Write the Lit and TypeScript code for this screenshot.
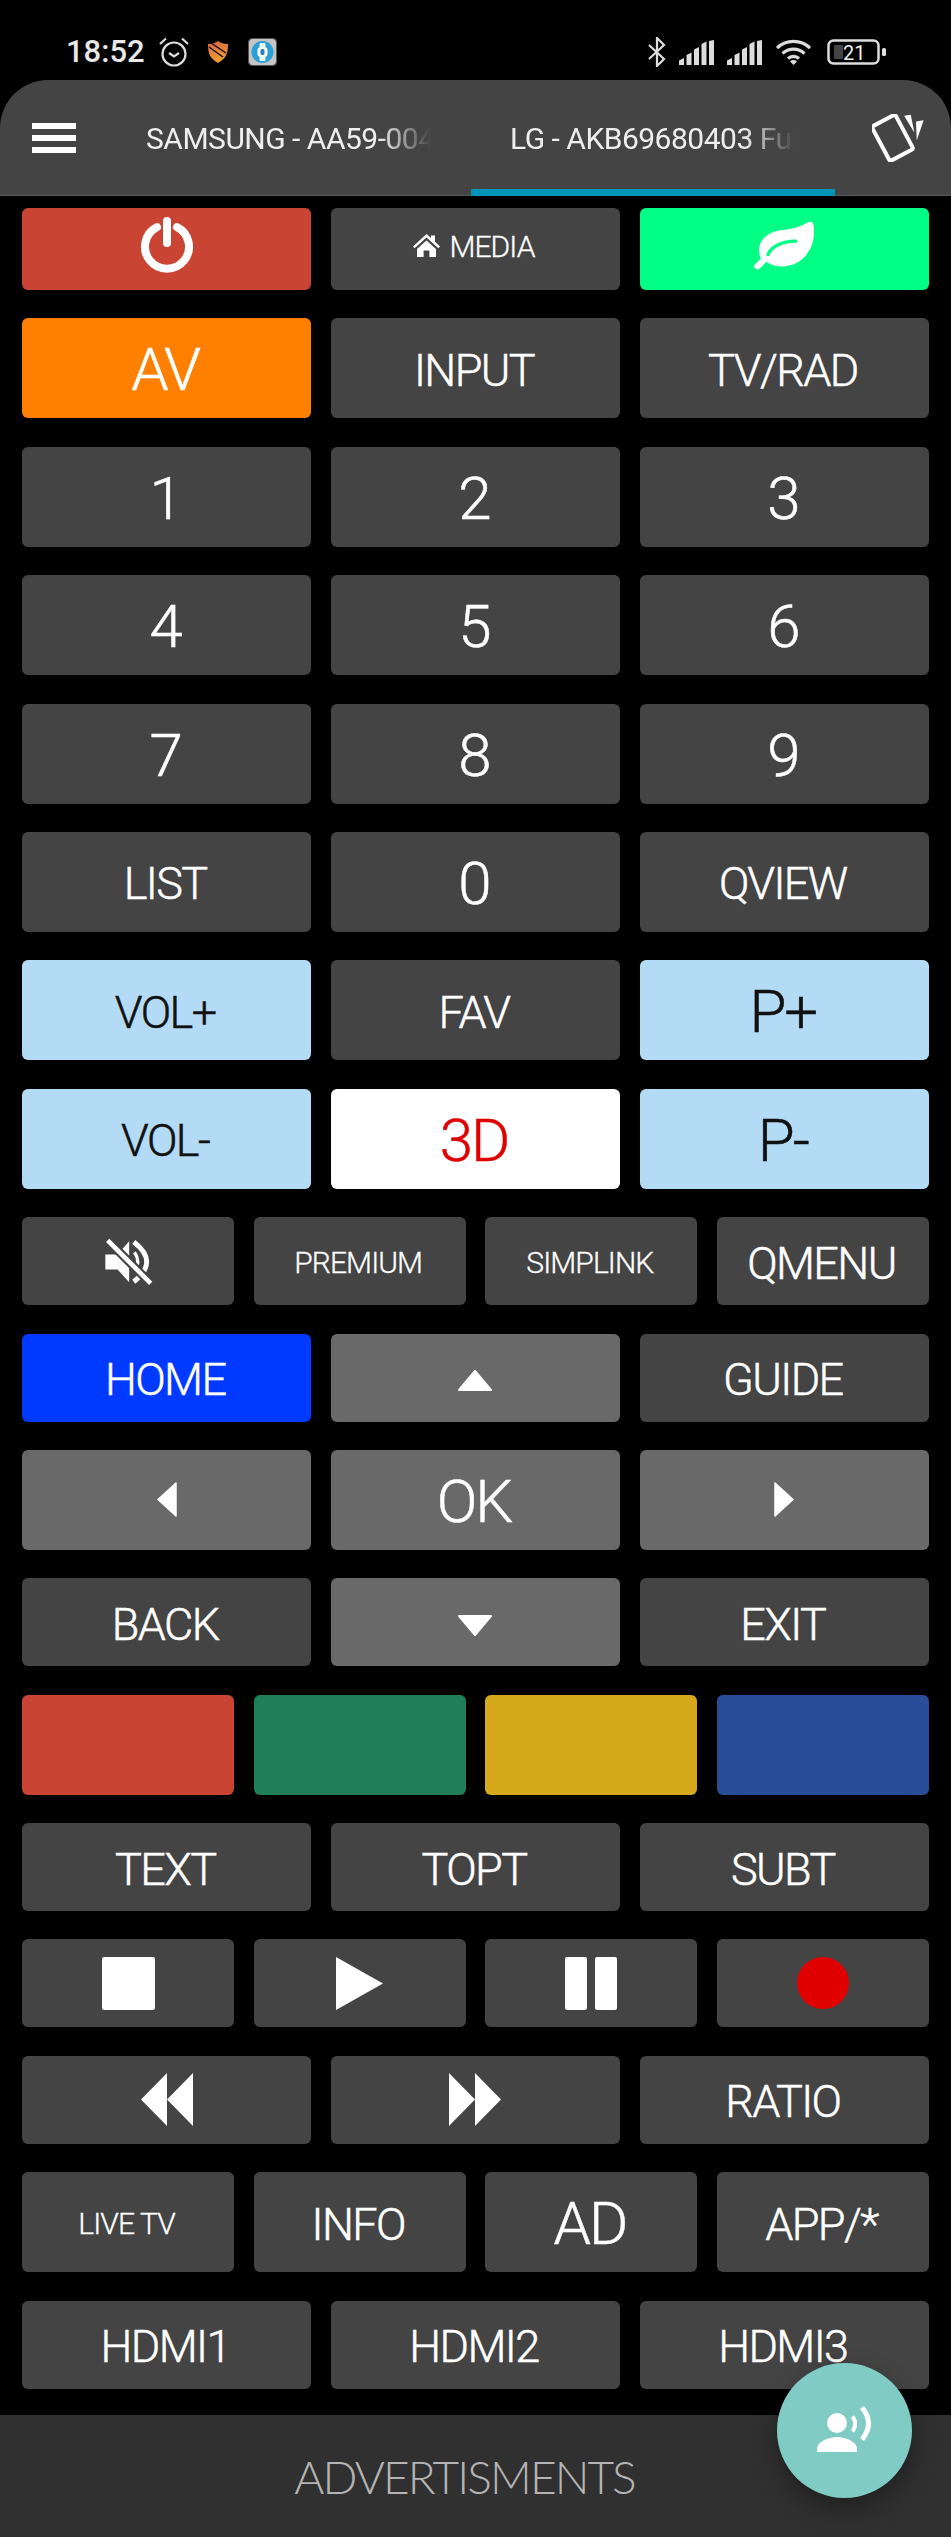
import { LitElement, html, css, svg } from "lit";
import { customElement } from "lit/decorators.js";

type Btn = { t?: unknown; c?: string };
type Row = { h: "tall" | "short" | "first"; n: 3 | 4; b: Btn[] };

const ic = {
  power: svg`<svg class="i" width="60" height="60" viewBox="0 0 60 60"><path d="M20 12.100A22 22 0 1 0 40 12.100" fill="none" stroke="#fff" stroke-width="8" stroke-linecap="round"/><path d="M30 6V28" fill="none" stroke="#fff" stroke-width="8" stroke-linecap="round"/></svg>`,
  home: svg`<svg class="home" width="27" height="23" viewBox="0 0 27 23"><path fill="#fff" d="M13.500 0 18 4V1.500h4v6.300L27 12.400l-1.600 1.800L13.500 3.400 1.600 14.200 0 12.400zM4 15 13.500 6.400 23 15v8h-6.600v-6.600h-5.800V23H4z"/></svg>`,
  leaf: svg`<svg class="i" width="62" height="49" viewBox="160 448 186 146"><path fill="#fff" d="M332 450C322 450 300 470 260 473 210 476 178 500 178 535 178 545 180 553 184 560L166 577C160 583 164 590 172 592 178 593 180 590 184 586L200 570C212 578 225 584 245 584 310 584 345 530 343 475 343 460 340 450 332 450Z"/><path d="M205 548C215 525 245 508 288 508" fill="none" stroke="#00ff85" stroke-width="10" stroke-linecap="round"/></svg>`,
  mute: svg`<svg class="i" width="49" height="47" viewBox="245 88 146 142"><path fill="#fff" d="M248 138H285L320 98V222L285 183H248z"/><path d="M336 131Q356 160 336 187" fill="none" stroke="#fff" stroke-width="10"/><path d="M334 100Q412 160 334 220" fill="none" stroke="#fff" stroke-width="15"/><path d="M255 95 385 225" stroke="#444" stroke-width="27" fill="none"/><path d="M255 95 385 225" stroke="#fff" stroke-width="14" fill="none"/></svg>`,
  up: svg`<svg class="i tu" width="34" height="21" viewBox="0 0 34 21"><path fill="#fff" stroke="#fff" stroke-width="2" stroke-linejoin="round" d="M17 1 33 20H1z"/></svg>`,
  down: svg`<svg class="i tu" width="34" height="21" viewBox="0 0 34 21"><path fill="#fff" stroke="#fff" stroke-width="2" stroke-linejoin="round" d="M17 20 33 1H1z"/></svg>`,
  left: svg`<svg class="i" width="20" height="35" viewBox="0 0 20 35"><path fill="#fff" stroke="#fff" stroke-width="1.500" stroke-linejoin="round" d="M1 17.500 19 1V34z"/></svg>`,
  right: svg`<svg class="i" width="20" height="35" viewBox="0 0 20 35"><path fill="#fff" stroke="#fff" stroke-width="1.500" stroke-linejoin="round" d="M19 17.500 1 1V34z"/></svg>`,
  stop: svg`<svg class="i" width="53" height="53" viewBox="0 0 53 53"><rect width="53" height="53" rx="2" fill="#fff"/></svg>`,
  play: svg`<svg class="i" width="47" height="53" viewBox="0 0 47 53"><path fill="#fff" d="M0 0 47 26.500 0 53z"/></svg>`,
  pause: svg`<svg class="i" width="52" height="53" viewBox="0 0 52 53"><rect width="22" height="53" rx="2" fill="#fff"/><rect x="30" width="22" height="53" rx="2" fill="#fff"/></svg>`,
  rec: svg`<svg class="i" width="52" height="52" viewBox="0 0 52 52"><circle cx="26" cy="26" r="26" fill="#e00000"/></svg>`,
  rew: svg`<svg class="i" width="52" height="53" viewBox="0 0 52 53"><path fill="#fff" d="M0 26.500 26 0V53zM26 26.500 52 0V53z"/></svg>`,
  ff: svg`<svg class="i" width="52" height="53" viewBox="0 0 52 53"><path fill="#fff" d="M26 26.500 0 0V53zM52 26.500 26 0V53z"/></svg>`,
};

const rows: Row[] = [
  { h: "first", n: 3, b: [{ t: ic.power, c: "red" }, { t: html`${ic.home}<span class="tx media">MEDIA</span>` }, { t: ic.leaf, c: "mint" }] },
  { h: "tall", n: 3, b: [{ t: "AV", c: "orange xl" }, { t: "INPUT" }, { t: "TV/RAD" }] },
  { h: "tall", n: 3, b: [{ t: "1", c: "xl" }, { t: "2", c: "xl" }, { t: "3", c: "xl" }] },
  { h: "tall", n: 3, b: [{ t: "4", c: "xl" }, { t: "5", c: "xl" }, { t: "6", c: "xl" }] },
  { h: "tall", n: 3, b: [{ t: "7", c: "xl" }, { t: "8", c: "xl" }, { t: "9", c: "xl" }] },
  { h: "tall", n: 3, b: [{ t: "LIST" }, { t: "0", c: "xl" }, { t: "QVIEW" }] },
  { h: "tall", n: 3, b: [{ t: "VOL+", c: "sky" }, { t: "FAV" }, { t: "P+", c: "sky xl" }] },
  { h: "tall", n: 3, b: [{ t: "VOL-", c: "sky" }, { t: "3D", c: "white xl" }, { t: "P-", c: "sky xl" }] },
  { h: "short", n: 4, b: [{ t: ic.mute }, { t: "PREMIUM", c: "sm" }, { t: "SIMPLINK", c: "sm" }, { t: "QMENU" }] },
  { h: "short", n: 3, b: [{ t: "HOME", c: "blue" }, { t: ic.up, c: "pad" }, { t: "GUIDE" }] },
  { h: "tall", n: 3, b: [{ t: ic.left, c: "pad" }, { t: "OK", c: "pad xl" }, { t: ic.right, c: "pad" }] },
  { h: "short", n: 3, b: [{ t: "BACK" }, { t: ic.down, c: "pad" }, { t: "EXIT" }] },
  { h: "tall", n: 4, b: [{ c: "red" }, { c: "green" }, { c: "yellow" }, { c: "navy" }] },
  { h: "short", n: 3, b: [{ t: "TEXT" }, { t: "TOPT" }, { t: "SUBT" }] },
  { h: "short", n: 4, b: [{ t: ic.stop }, { t: ic.play }, { t: ic.pause }, { t: ic.rec }] },
  { h: "short", n: 3, b: [{ t: ic.rew }, { t: ic.ff }, { t: "RATIO" }] },
  { h: "tall", n: 4, b: [{ t: "LIVE TV", c: "sm" }, { t: "INFO" }, { t: "AD", c: "xl" }, { t: "APP/*" }] },
  { h: "short", n: 3, b: [{ t: "HDMI1" }, { t: "HDMI2" }, { t: "HDMI3" }] },
];

const signal = svg`<svg width="35" height="25" viewBox="0 0 35 25"><path fill="#ddd" d="M0 25V20.500L5 18V25zM7.500 25V15L12.500 12.500V25zM15 25V9.500L20 7V25zM22.500 25V4L27.500 1.500V25zM30 25V1L35 0V25z"/></svg>`;

@customElement("app-root")
export class AppRoot extends LitElement {
  static styles = css`
    :host {
      display: block;
      position: relative;
      width: 951px;
      height: 2537px;
      overflow: hidden;
      background: #000;
      font-family: Roboto, "Liberation Sans", sans-serif;
      color: #fff;
    }
    .page { display: flex; flex-direction: column; height: 100%; }
    .status {
      height: 80px;
      flex: none;
      display: flex;
      align-items: flex-start;
      justify-content: space-between;
      padding: 37px 65px 0 66px;
      box-sizing: border-box;
    }
    .st-l, .st-r { display: flex; align-items: center; height: 30px; }
    .time { font-size: 31px; font-weight: 500; color: #e8e8e8; line-height: 30px; width: 77px; white-space: nowrap; margin-right: 16px; }
    .shield { margin: 0 20px 0 19px; }
    .st-r { gap: 13px; }
    .bat { margin-left: 2px; }
    .bar {
      height: 116px;
      flex: none;
      box-sizing: border-box;
      background: #444;
      border-radius: 48px 48px 0 0;
      border-bottom: 1px solid #5a5a5a;
      display: flex;
      align-items: stretch;
      position: relative;
    }
    .burger { width: 107px; flex: none; display: flex; flex-direction: column; gap: 6.500px; padding: 43px 0 0 32px; box-sizing: border-box; }
    .burger i { display: block; width: 44px; height: 5.500px; background: #fff; }
    .tab { width: 364px; flex: none; box-sizing: border-box; padding: 0 40px 0 39px; position: relative; display: flex; justify-content: center; }
    .tab span {
      display: block;
      width: 285px;
      overflow: hidden;
      white-space: nowrap;
      font-size: 30px;
      letter-spacing: -0.500px;
      line-height: 35px;
      margin-top: 41px;
      height: 40px;
      color: #eee;
      -webkit-mask-image: linear-gradient(90deg, #000 82%, transparent 100%);
      mask-image: linear-gradient(90deg, #000 82%, transparent 100%);
    }
    .tab.on::after { content: ""; position: absolute; left: 0; right: 0; bottom: -1px; height: 7px; background: #0093b8; }
    .swap { position: absolute; right: 26px; top: 34px; }
    .pad-area { flex: 1; display: flex; flex-direction: column; gap: 28.400px; padding: 12px 22px 0; min-height: 0; }
    .row { display: grid; gap: 19.500px; flex: none; }
    .row.n3 { grid-template-columns: repeat(3, 1fr); }
    .row.n4 { grid-template-columns: repeat(4, 1fr); }
    .row.tall { height: 100px; }
    .row.short { height: 88px; }
    .row.first { height: 82px; }
    .row.first .btn { box-sizing: border-box; padding-bottom: 8px; }
    .btn {
      background: #444;
      border-radius: 6px;
      display: flex;
      align-items: center;
      justify-content: center;
      font-size: 45px;
      font-weight: 300;
      -webkit-text-stroke: 0.500px currentColor;
      letter-spacing: -1.600px;
      line-height: 1;
      color: #fff;
      white-space: nowrap;
    }
    .tx { padding: 4px 3px 0 0; }
    .btn.xl { font-size: 60px; letter-spacing: -2px; }
    .btn.sm { font-size: 30px; letter-spacing: -0.900px; -webkit-text-stroke: 0.300px currentColor; }
    .btn.red { background: #c94433; }
    .btn.mint { background: #00ff85; }
    .btn.orange { background: #ff8000; }
    .btn.sky { background: #b3dbf5; color: #111; }
    .btn.white { background: #fff; color: #e00000; }
    .btn.blue { background: #0039ff; }
    .btn.pad { background: #696969; }
    .btn.green { background: #217f57; }
    .btn.yellow { background: #d6a91d; }
    .btn.navy { background: #2a4d9a; }
    .media { font-size: 30px; letter-spacing: -0.900px; margin-left: 9px; -webkit-text-stroke: 0.300px currentColor; }
    .i, .home { display: block; }
    .tu { margin-top: 6px; }
    .ads {
      position: absolute;
      left: 0;
      right: 0;
      bottom: 0;
      height: 122px;
      background: #303030;
      display: flex;
      align-items: center;
      justify-content: center;
    }
    .ads span { font-family: Lato, sans-serif; font-weight: 300; font-size: 46px; letter-spacing: -1.900px; color: #b4b4b4; margin-right: 22px; }
    .fab {
      position: absolute;
      left: 777px;
      top: 2363px;
      width: 135px;
      height: 135px;
      border-radius: 50%;
      background: #80cbc4;
      box-shadow: 0 10px 24px rgba(0, 0, 0, 0.35);
    }
  `;

  private btn(b: Btn) {
    const body = typeof b.t === "string" ? html`<span class="tx">${b.t}</span>` : b.t ?? "";
    return html`<div class="btn ${b.c ?? ""}">${body}</div>`;
  }

  render() {
    return html`
      <div class="page">
        <div class="status">
          <div class="st-l">
            <span class="time">18:52</span>
            <svg width="30" height="30" viewBox="0 0 30 30"><circle cx="15" cy="17" r="11.500" fill="none" stroke="#ddd" stroke-width="2.200"/><path d="M10 16l5 3.500 5-3.500" fill="none" stroke="#ddd" stroke-width="2.200"/><path d="M1 7 7 1.500M29 7 23 1.500" stroke="#ddd" stroke-width="2.200" fill="none"/></svg>
            <svg class="shield" width="20" height="22" viewBox="0 0 20 22"><defs><linearGradient id="sg" x1="0" y1="0" x2="0.300" y2="1"><stop offset="0" stop-color="#d9614a"/><stop offset="1" stop-color="#f0a030"/></linearGradient></defs><path fill="url(#sg)" d="M10 0c2.500 2 6 3 10 3 0 8-1 14-10 19C1 17 0 11 0 3c4 0 7.500-1 10-3z"/><path d="M1 6 15 16M3 2 18 12" stroke="#111" stroke-width="1.500" fill="none"/></svg>
            <svg width="29" height="28" viewBox="0 0 29 28"><rect x="0.500" y="0.500" width="28" height="27" rx="4" fill="#c4c4c4" stroke="#555"/><circle cx="14.500" cy="14" r="11" fill="#2a9fd6"/><rect x="11.500" y="5" width="6" height="18" rx="1" fill="#e8f4fa"/><rect x="9.500" y="9" width="10" height="10" rx="3.500" fill="#fff"/><rect x="12.500" y="11" width="4" height="6" rx="1.500" fill="#2a80b0"/></svg>
          </div>
          <div class="st-r">
            <svg width="18" height="30" viewBox="0 0 18 30"><path d="M1 8 16 22 9 29V1l7 7L1 22" fill="none" stroke="#ddd" stroke-width="2.200"/></svg>
            ${signal}${signal}
            <svg width="37" height="26" viewBox="0 0 37 26"><path d="M2 9a24 24 0 0 1 33 0M7.500 14.500a16 16 0 0 1 22 0M13 19.500a8 8 0 0 1 11 0" fill="none" stroke="#ddd" stroke-width="3.200"/><path d="M18.500 26l-3.500-3.500a5 5 0 0 1 7 0z" fill="#ddd"/></svg>
            <svg class="bat" width="59" height="26" viewBox="0 0 59 26"><rect x="1.500" y="1.500" width="50" height="23" rx="5" fill="none" stroke="#ddd" stroke-width="2.500"/><rect x="7" y="6" width="9" height="14" rx="1" fill="#444"/><rect x="55" y="9" width="4" height="8" rx="1.500" fill="#ddd"/><text x="16" y="21" font-family="Roboto" font-size="20" fill="#eee">21</text></svg>
          </div>
        </div>
        <div class="bar">
          <div class="burger"><i></i><i></i><i></i></div>
          <div class="tab"><span>SAMSUNG - AA59-00465A</span></div>
          <div class="tab on"><span>LG - AKB69680403 Full</span></div>
          <svg class="swap" width="53" height="48" viewBox="515 133 160 145"><rect x="-40" y="-59" width="80" height="118" rx="6" transform="translate(577 205) rotate(-28)" fill="none" stroke="#fff" stroke-width="12"/><path fill="#fff" d="M612 138 632 135 643 190zM648 156 671 152 650 213z"/></svg>
        </div>
        <div class="pad-area">
          ${rows.map((r) => html`<div class="row n${r.n} ${r.h}">${r.b.map((b) => this.btn(b))}</div>`)}
        </div>
      </div>
      <div class="ads"><span>ADVERTISMENTS</span></div>
      <div class="fab">
        <svg width="135" height="135" viewBox="0 0 135 135"><circle cx="60" cy="60" r="10" fill="#fff"/><path fill="#fff" d="M40 89v-3c0-8 13-12 20-12s20 4 20 12v3z"/><path d="M75.500 53.500q5.500 7.500 0 15" fill="none" stroke="#fff" stroke-width="4"/><path d="M85 44.500q13 16 0 32" fill="none" stroke="#fff" stroke-width="5"/></svg>
      </div>
    `;
  }
}
